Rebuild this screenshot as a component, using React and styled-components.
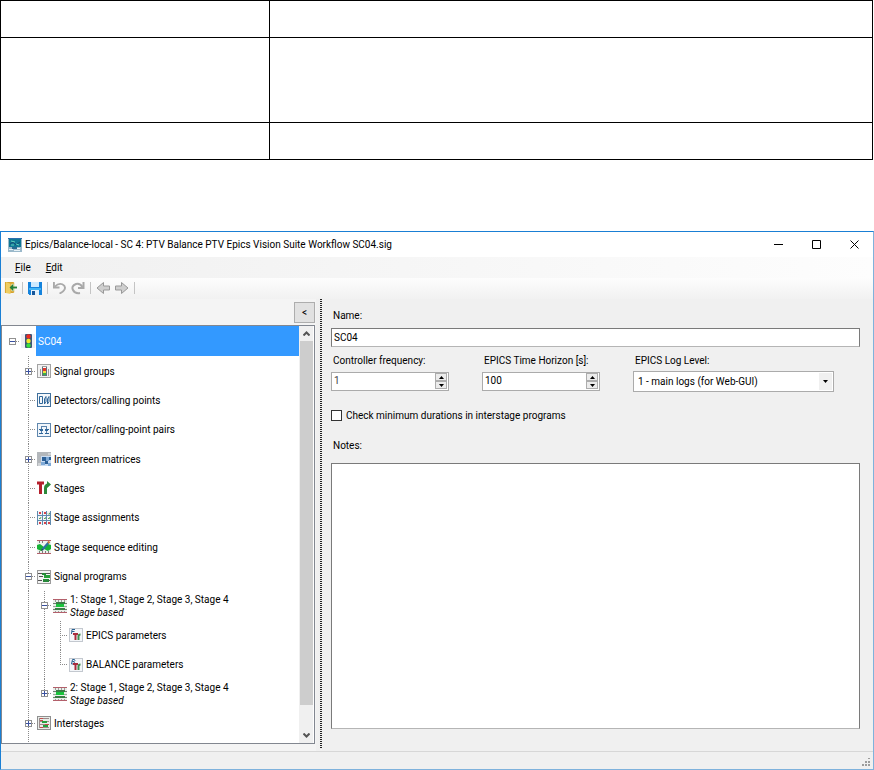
import React from "react";
import styled, { createGlobalStyle, css } from "styled-components";

const dotsY = "repeating-linear-gradient(to bottom, #8a8a8a 0 1px, transparent 1px 2px)";
const dotsX = "repeating-linear-gradient(to right, #8a8a8a 0 1px, transparent 1px 2px)";

const GlobalStyle = createGlobalStyle`
  * { box-sizing: border-box; }
  body { margin: 0; background: #fff; }
  body, button, input, select, textarea {
    font-family: Roboto, "Open Sans", sans-serif;
    font-size: 10px;
    line-height: 13px;
    color: #000;
  }
  button { padding: 0; }
`;

const Page = styled.div`
  display: flex;
  flex-direction: column;
  gap: 71px;
  min-height: 100vh;
`;

const DocTable = styled.table`
  width: calc(100% - 1px);
  border-collapse: collapse;
  table-layout: fixed;
  td { border: 1px solid #000; padding: 0; }
  td:first-child { width: 269px; }
`;

const DocRow = styled.tr`
  height: ${(p) => (p.$tall ? 85 : 37)}px;
`;

const Window = styled.main`
  flex: 1;
  display: flex;
  flex-direction: column;
  border: 1px solid #7fb2dc;
  border-top-color: #1a7fd4;
  border-left-color: #1a7fd4;
  background: #f0f0f0;
`;

const TitleBar = styled.header`
  display: flex;
  align-items: center;
  height: 25px;
  padding-left: 7px;
  background: #fff;
`;

const Title = styled.h1`
  flex: 1;
  margin: 0 0 0 3px;
  font-size: 10px;
  font-weight: 400;
  white-space: nowrap;
`;

const WindowButton = styled.button`
  display: grid;
  place-items: center;
  width: 38px;
  height: 25px;
  border: 0;
  background: none;
`;

const MenuBar = styled.nav`
  display: flex;
  align-items: center;
  gap: 15px;
  height: 21px;
  padding-left: 14px;
  background: linear-gradient(to right, #f0f0f0, #fdfdfd);
`;

const MenuItem = styled.button`
  border: 0;
  background: none;
  &::first-letter { text-decoration: underline; }
`;

const Toolbar = styled.div`
  display: flex;
  align-items: center;
  gap: 5px;
  height: 21px;
  padding: 0 0 2px 3px;
  background: linear-gradient(#fdfdfd, #f1f1f1);
`;

const ToolButton = styled.button`
  display: grid;
  border: 0;
  background: none;
`;

const Separator = styled.span`
  width: 1px;
  height: 12px;
  background: #c4c4c4;
`;

const Body = styled.div`
  flex: 1;
  display: flex;
`;

const Sidebar = styled.aside`
  display: flex;
  flex-direction: column;
  flex: 0 0 315px;
  padding-bottom: 7px;
  background: #f4f4f4;
`;

const SidebarHead = styled.div`
  display: flex;
  justify-content: flex-end;
  padding: 3px 1px 2px 0;
`;

const CollapseButton = styled.button`
  width: 21px;
  height: 21px;
  border: 1px solid #adadad;
  background: #e1e1e1;
`;

const TreeBox = styled.div`
  flex: 1;
  display: flex;
  margin-right: 1px;
  padding-right: 1px;
  border: 1px solid #828790;
  background: #fff;
`;

const TreeList = styled.ul`
  flex: 1;
  display: flex;
  flex-direction: column;
  margin: 0;
  padding: 0 0 5px;
  list-style: none;
  background: ${dotsY} 26px 100% / 1px 12px no-repeat;
`;

const TreeRow = styled.li`
  flex: 1 0 ${(p) => (p.$root ? 30 : 29)}px;
  display: flex;
  align-items: center;
  padding-left: 2px;
`;

const Cell = styled.span`
  align-self: stretch;
  display: grid;
  place-items: center;
  width: 16px;
  padding-left: 1px;
  background-repeat: no-repeat;
  background-position: 8px 0, 8px 50%;
  background-size: 1px ${(p) => (p.$line === "full" ? "100%" : p.$line === "half" ? "50%" : "0")},
    ${(p) => (p.$joint ? "8px 1px" : "0 1px")};
  background-image: ${dotsY}, ${dotsX};
`;

const Expander = styled.button`
  display: grid;
  place-items: center;
  width: 7px;
  height: 7px;
  border: 1px solid #919191;
  background: #fff;
`;

const RowIcon = styled.span`
  display: grid;
  place-items: center;
  width: 14px;
  height: 14px;
  margin: 0 1px;
`;

const Label = styled.span`
  padding-left: 2px;
  white-space: nowrap;
  em { display: block; }
  ${(p) =>
    p.$selected &&
    css`
      align-self: stretch;
      flex: 1;
      display: flex;
      align-items: center;
      background: #3399ff;
      color: #fff;
    `}
`;

const ScrollBar = styled.div`
  display: flex;
  flex-direction: column;
  width: 14px;
  background: #f0f0f0;
  padding: 0 0 0 1px;
`;

const ScrollArrow = styled.button`
  display: grid;
  place-items: center;
  height: 15px;
  border: 0;
  background: none;
`;

const Track = styled.div`
  flex: 1;
  display: flex;
  flex-direction: column;
`;

const Thumb = styled.div`
  height: 94%;
  background: #cdcdcd;
`;

const Splitter = styled.div`
  width: 2px;
  margin: 0 9px 2px 4px;
  background: repeating-linear-gradient(to bottom, #222 0 1px, transparent 1px 2px);
`;

const Form = styled.section`
  flex: 1;
  display: flex;
  flex-direction: column;
  padding: 10px 13px 22px 0;
`;

const FieldLabel = styled.label`
  padding-left: 2px;
`;

const TextInput = styled.input`
  height: 19px;
  margin-top: 6px;
  padding: 0 2px;
  border: 1px solid #7a7a7a;
  border-bottom-color: #b5b5b5;
  border-radius: 0;
  background: #fff;
`;

const FieldRow = styled.div`
  display: flex;
  gap: 33px;
  padding-top: 7px;
`;

const Field = styled.div`
  display: flex;
  flex-direction: column;
  gap: 4px;
  width: ${(p) => (p.$wide ? 201 : 118)}px;
`;

const SpinBox = styled.div`
  display: flex;
  height: 19px;
  margin-top: 1px;
  border: 1px solid #ababab;
  background: #fff;
`;

const SpinInput = styled.input`
  flex: 1;
  min-width: 0;
  padding: 0 0 3px 2px;
  border: 0;
  background: none;
  appearance: textfield;
  color: ${(p) => (p.$muted ? "#444" : "#000")};
  &::-webkit-inner-spin-button { appearance: none; }
`;

const SpinButtons = styled.div`
  display: flex;
  flex-direction: column;
  width: 12px;
  margin-right: 1px;
`;

const SpinButton = styled.button`
  display: grid;
  place-items: center;
  height: 8px;
  border: 1px solid #adadad;
  background: #ececec;
`;

const SelectBox = styled.div`
  display: grid;
  height: 21px;
  border: 1px solid #ababab;
  background: #fff;
  > * { grid-area: 1 / 1; }
`;

const Select = styled.select`
  appearance: none;
  padding: 0 14px 0 4px;
  border: 0;
  border-radius: 0;
  background: none;
`;

const SelectArrow = styled.span`
  justify-self: end;
  display: grid;
  place-items: center;
  width: 13px;
  margin: 1px;
  background: #f0f0f0;
  pointer-events: none;
`;

const CheckLabel = styled.label`
  display: flex;
  align-items: center;
  gap: 4px;
  margin: 17px 0;
`;

const CheckBox = styled.input`
  appearance: none;
  width: 11px;
  height: 11px;
  margin: 0;
  border: 1px solid #333;
  background: #fff;
  &:checked { background: #333; }
`;

const Notes = styled.textarea`
  flex: 1;
  min-height: 80px;
  margin-top: 11px;
  padding: 2px;
  border: 1px solid #7a7a7a;
  border-bottom-color: #b5b5b5;
  border-radius: 0;
  background: #fff;
  resize: none;
`;

const StatusBar = styled.footer`
  display: flex;
  justify-content: flex-end;
  align-items: flex-end;
  height: 18px;
  padding: 0 2px 2px 0;
  border-top: 1px solid #d7d7d7;
`;

const Icon = ({ size = 14, crisp, children }) => (
  <svg
    width={size}
    height={size}
    viewBox="0 0 14 14"
    shapeRendering={crisp ? "crispEdges" : "auto"}
    aria-hidden="true"
  >
    {children}
  </svg>
);

const AppIcon = () => (
  <Icon>
    <rect width="14" height="14" fill="#9bb9cb" />
    <rect x="1" y="1" width="12" height="8" fill="#0f7795" />
    <path d="M0 .5h14" stroke="#2b6fae" />
    <path d="M2 6l3-2 3 3 4-3" stroke="#174c75" fill="none" />
    <path d="M3 3l4 1M8 6l3 1M3 7h3" stroke="#5fd3bd" fill="none" />
    <path d="M1 11.500h4M6 12.500h6M9 10.500h3" stroke="#e8f2f7" fill="none" />
    <rect x="4" y="9" width="5" height="2" fill="#286a91" />
  </Icon>
);

const LightIcon = () => (
  <Icon>
    <rect x="0" y="0" width="14" height="14" fill="#eeeef4" />
    <rect x="4" y="0" width="7" height="14" rx="1" fill="#3d5676" />
    <circle cx="7.500" cy="2.500" r="2.200" fill="#f02a20" />
    <circle cx="7.500" cy="7" r="2.200" fill="#f5e92b" />
    <circle cx="7.500" cy="11.500" r="2.200" fill="#35e03b" />
  </Icon>
);

const GroupIcon = () => (
  <Icon crisp>
    <rect x="0.500" y="0.500" width="13" height="13" fill="#f2f2f2" stroke="#a3a3a3" />
    <path d="M3.500 5v7M11.500 5v7M5 2.500h5" stroke="#9c9c9c" fill="none" />
    <rect x="5" y="3" width="5" height="9" fill="#64707c" />
    <rect x="6" y="3" width="3" height="1" fill="#fff" />
    <rect x="6" y="4" width="3" height="3" fill="#e6372c" />
    <rect x="6" y="7" width="3" height="2" fill="#f3e23a" />
    <rect x="6" y="9" width="3" height="2" fill="#3caf4a" />
  </Icon>
);

const DetectorIcon = () => (
  <Icon>
    <rect x="0.500" y="0.500" width="13" height="13" fill="#f5f8fb" stroke="#40709c" />
    <path d="M2.500 3.500h3v7h-3z" stroke="#2f6699" fill="none" />
    <path d="M7.500 11V6l1.500-2.500V8.500zM10.500 11V6L12 3.500V8.500z" stroke="#2f6699" fill="none" />
  </Icon>
);

const PairIcon = () => (
  <Icon crisp>
    <rect x="0.500" y="0.500" width="13" height="13" fill="#f1f6fb" stroke="#5f87ae" />
    <path d="M4.500 11V3.500h5V11" stroke="#5a83ad" fill="none" />
    <path d="M2 6.500h4M8 6.500h4M2 10.500h4M8 10.500h4" stroke="#2f6699" />
    <path d="M3 7h3v1H3zM8 7h3v1H8z" fill="#2f6699" />
  </Icon>
);

const MatrixIcon = () => (
  <Icon crisp>
    <rect width="14" height="14" fill="#c9dcf2" />
    <path d="M0 0h14v4H4v10H0z" fill="#b3b7bb" />
    <path d="M1 11h3v3H1zM11 1h3v2h-3z" fill="#d0d3d6" />
    <path d="M5 5h4v4H5zM8 9h3v3H8zM12 5h2v3h-2z" fill="#2c6097" />
    <path d="M9 5h3v4H9zM4 10h4v3H4zM11 11h3v3h-3z" fill="#7ea9d6" />
  </Icon>
);

const StagesIcon = () => (
  <Icon>
    <path d="M0 2h7M3.500 2v11" stroke="#b5202d" strokeWidth="3" fill="none" />
    <path d="M8.500 13V7q0-3 3-3" stroke="#2d8a3b" strokeWidth="3" fill="none" />
    <path d="M10 0l4 3.500-4 3.500z" fill="#2d8a3b" />
  </Icon>
);

const AssignIcon = () => (
  <Icon>
    <rect width="14" height="14" fill="#f3f6f7" />
    <path d="M2 1l2 2M4 1L2 3M7 1l2 2M9 1L7 3M2 11l2 2M4 11l-2 2M7 11l2 2M9 11l-2 2" stroke="#d4444c" />
    <path d="M11 2.500l1 1 1-2M2 7l1 1 1-2M7 7l1 1 1-2M11 7l1 1 1-2" stroke="#5da35f" fill="none" />
    <path d="M.5 0v14M5.500 0v14M9.500 0v14M13.500 0v14M0 4.500h14M0 9.500h14" stroke="#5f8aaf" />
    <path d="M11 11l2 2M13 11l-2 2" stroke="#d4444c" />
  </Icon>
);

const SequenceIcon = () => (
  <Icon>
    <rect y="1" width="14" height="12" fill="#eef2ee" />
    <path d="M0 .5h14M0 13.500h14" stroke="#b3606b" />
    <path d="M2.500 1v2M5.500 1v2M2.500 11v2M5.500 11v2M8.500 11v2M11.500 11v2" stroke="#7d7d7d" />
    <path d="M0 5l3-1 4 3 4-3 3 1v4l-3 2-4-2-3 2-4-2z" fill="#17b236" />
    <path d="M5 10l7-8" stroke="#2f6fa3" strokeWidth="2" />
    <path d="M4 11l2-1-1-1z" fill="#222" />
    <path d="M11 3l1.500-1.500" stroke="#d77d32" strokeWidth="2" />
  </Icon>
);

const ProgramsIcon = () => (
  <Icon crisp>
    <rect x="0.500" y="0.500" width="13" height="13" fill="#f4f4f4" stroke="#9b9b9b" />
    <path d="M1 3.500h4M2 6.500h4M1 10.500h4M8 3.500h5M11 10.500h2" stroke="#555" />
    <rect x="5" y="3" width="4" height="2" fill="#27883a" />
    <rect x="7" y="5" width="6" height="3" fill="#27a03a" />
    <rect x="6" y="9" width="6" height="3" fill="#27883a" />
  </Icon>
);

const ProgramIcon = () => (
  <Icon crisp>
    <rect y="1" width="14" height="12" fill="#eaf0ea" />
    <path d="M0 .5h14M0 13.500h14" stroke="#b3606b" />
    <path d="M0 4.500h14M0 10.500h14" stroke="#6b7f70" />
    <path d="M2.500 1v2M5.500 1v2M8.500 1v2M11.500 1v2M2.500 12v1M5.500 12v1M8.500 12v1M11.500 12v1" stroke="#9a9a9a" />
    <rect x="3" y="3" width="9" height="2" fill="#3b7c46" />
    <rect x="3" y="5" width="8" height="3" fill="#19c43c" />
    <path d="M0 7.500h3M11 7.500h3" stroke="#9aa79c" />
    <rect x="2" y="9" width="10" height="2" fill="#3b7c46" />
  </Icon>
);

const ParamIcon = ({ balance }) => (
  <Icon>
    <rect x="0.500" y="0.500" width="13" height="13" fill="#f4f6f9" stroke="#c3c8cf" />
    {balance ? (
      <path d="M2.500 6L3.500 1.500h2q1 1-.5 2H3.500h1.500q1 1.500-.5 2.500z" stroke="#2a6292" fill="none" />
    ) : (
      <path d="M6 1.500H3L2.500 6M3 3.500h2.500" stroke="#2a6292" fill="none" />
    )}
    <path d="M4 6h5M6.500 6v6" stroke="#a92b3b" strokeWidth="2" />
    <path d="M9.500 12V8q0-1.500 2-1.500" stroke="#3d8a4c" strokeWidth="2" fill="none" />
  </Icon>
);

const InterstageIcon = () => (
  <Icon crisp>
    <rect x="0.500" y="0.500" width="13" height="13" fill="#e8ece8" stroke="#8f8f8f" />
    <path d="M2.500 2v10M2 2.500h10M2 5.500h10M2 8.500h10M2 11.500h10" stroke="#9b8b8b" />
    <path d="M5 5h5v2H5zM6 9h5v2H6z" fill="#24a03c" />
    <path d="M3 4.500h3M8 8.500h4M3 2.500h3M3 11.500h3" stroke="#c44a4a" />
  </Icon>
);

const OpenIcon = () => (
  <Icon size={13}>
    <path d="M1 1h9l1 1v10l-1 1H1z" fill="#d7a32c" />
    <path d="M2 1l5 2v11l-5-1z" fill="#efcd61" />
    <path d="M8 3h3v8H8z" fill="#f8ecc2" />
    <path d="M14 7H9" stroke="#27803a" strokeWidth="2" />
    <path d="M6 7l4-4v8z" fill="#27803a" />
  </Icon>
);

const SaveIcon = () => (
  <Icon crisp>
    <path d="M0 1h13l1 1v12H1l-1-1z" fill="#1583dc" />
    <rect x="3" y="1" width="8" height="5" fill="#cdeaff" />
    <rect x="1" y="7" width="12" height="2" fill="#40b5f6" />
    <rect x="3" y="9" width="8" height="5" fill="#e4f1fb" />
    <rect x="4" y="10" width="3" height="4" fill="#15569b" />
  </Icon>
);

const UndoIcon = () => (
  <Icon size={13}>
    <path d="M2 6q4-4 8-2.500 4 2 2.500 5.500Q11 12 7 13.500" stroke="#a9a9a9" strokeWidth="2" fill="none" />
    <path d="M1 1v6h6" stroke="#a9a9a9" strokeWidth="2" fill="none" />
  </Icon>
);

const RedoIcon = () => (
  <Icon>
    <path d="M11.500 6Q9 2 5 3 0 5 2 9q2 4 7 3" stroke="#a9a9a9" strokeWidth="2" fill="none" />
    <path d="M12.500 1v6H7" stroke="#a9a9a9" strokeWidth="2" fill="none" />
  </Icon>
);

const ArrowIcon = ({ right }) => (
  <Icon>
    <path
      d={right ? "M.5 5h6V1.500L13 7l-6.500 5.500V9h-6z" : "M13.500 5h-6V1.500L1 7l6.500 5.500V9h6z"}
      fill="#cfcfcf"
      stroke="#999"
    />
  </Icon>
);

const Sign = ({ plus }) => (
  <svg width="5" height="5" viewBox="0 0 5 5" aria-hidden="true">
    <path d={plus ? "M0 2.500h5M2.500 0v5" : "M0 2.500h5"} stroke="#3a51a0" />
  </svg>
);

const Caret = ({ up }) => (
  <svg width="5" height="3" viewBox="0 0 5 3" aria-hidden="true">
    <path d={up ? "M0 3h5L2.500 0z" : "M0 0h5L2.500 3z"} fill="#000" />
  </svg>
);

const Chevron = ({ up }) => (
  <svg width="7" height="5" viewBox="0 0 7 5" aria-hidden="true">
    <path d={up ? "M.5 4.500l3-3 3 3" : "M.5 .5l3 3 3-3"} fill="none" stroke="#555" strokeWidth="2" />
  </svg>
);

/* cells: n = blank, f = full guide, h = half guide; the last one joins the icon */
const rows = [
  { text: "SC04", icon: LightIcon, cells: "n", sign: "-", selected: true },
  { text: "Signal groups", icon: GroupIcon, cells: "nf", sign: "+" },
  { text: "Detectors/calling points", icon: DetectorIcon, cells: "nf" },
  { text: "Detector/calling-point pairs", icon: PairIcon, cells: "nf" },
  { text: "Intergreen matrices", icon: MatrixIcon, cells: "nf", sign: "+" },
  { text: "Stages", icon: StagesIcon, cells: "nf" },
  { text: "Stage assignments", icon: AssignIcon, cells: "nf" },
  { text: "Stage sequence editing", icon: SequenceIcon, cells: "nf" },
  { text: "Signal programs", icon: ProgramsIcon, cells: "nf", sign: "-" },
  { text: "1: Stage 1, Stage 2, Stage 3, Stage 4", note: "Stage based", icon: ProgramIcon, cells: "nff", sign: "-" },
  { text: "EPICS parameters", icon: ParamIcon, cells: "nfff" },
  { text: "BALANCE parameters", icon: () => <ParamIcon balance />, cells: "nffh" },
  { text: "2: Stage 1, Stage 2, Stage 3, Stage 4", note: "Stage based", icon: ProgramIcon, cells: "nfh", sign: "+" },
  { text: "Interstages", icon: InterstageIcon, cells: "nf", sign: "+" },
];

const lineOf = { n: "none", f: "full", h: "half" };

const Row = ({ text, note, icon: Picture, cells, sign, selected }) => (
  <TreeRow $root={cells.length === 1}>
    {[...cells].map((c, i) => {
      const last = i === cells.length - 1;
      return (
        <Cell key={i} $line={lineOf[c]} $joint={last}>
          {last && sign && (
            <Expander aria-label={sign === "+" ? `Expand ${text}` : `Collapse ${text}`}>
              <Sign plus={sign === "+"} />
            </Expander>
          )}
        </Cell>
      );
    })}
    <RowIcon>
      <Picture />
    </RowIcon>
    <Label $selected={selected}>
      {text}
      {note && <em>{note}</em>}
    </Label>
  </TreeRow>
);

const Spin = ({ id, label, value, muted }) => (
  <Field>
    <FieldLabel htmlFor={id}>{label}</FieldLabel>
    <SpinBox>
      <SpinInput id={id} type="number" defaultValue={value} $muted={muted} />
      <SpinButtons>
        <SpinButton aria-label="Increase"><Caret up /></SpinButton>
        <SpinButton aria-label="Decrease"><Caret /></SpinButton>
      </SpinButtons>
    </SpinBox>
  </Field>
);

export default function App() {
  return (
    <Page>
      <GlobalStyle />
      <DocTable>
        <tbody>
          <DocRow><td /><td /></DocRow>
          <DocRow $tall><td /><td /></DocRow>
          <DocRow><td /><td /></DocRow>
        </tbody>
      </DocTable>
      <Window>
        <TitleBar>
          <AppIcon />
          <Title>Epics/Balance-local - SC 4: PTV Balance PTV Epics Vision Suite Workflow SC04.sig</Title>
          <WindowButton aria-label="Minimize">
            <svg width="9" height="9"><path d="M0 4.500h9" stroke="#000" /></svg>
          </WindowButton>
          <WindowButton aria-label="Maximize">
            <svg width="9" height="9"><path d="M.5 .5h8v8h-8z" fill="none" stroke="#000" /></svg>
          </WindowButton>
          <WindowButton aria-label="Close">
            <svg width="9" height="9"><path d="M.5 .5l8 8M8.500 .5l-8 8" stroke="#000" /></svg>
          </WindowButton>
        </TitleBar>
        <MenuBar>
          <MenuItem>File</MenuItem>
          <MenuItem>Edit</MenuItem>
        </MenuBar>
        <Toolbar>
          <ToolButton aria-label="Open"><OpenIcon /></ToolButton>
          <Separator />
          <ToolButton aria-label="Save"><SaveIcon /></ToolButton>
          <Separator />
          <ToolButton aria-label="Undo"><UndoIcon /></ToolButton>
          <ToolButton aria-label="Redo"><RedoIcon /></ToolButton>
          <Separator />
          <ToolButton aria-label="Back"><ArrowIcon /></ToolButton>
          <ToolButton aria-label="Forward"><ArrowIcon right /></ToolButton>
          <Separator />
        </Toolbar>
        <Body>
          <Sidebar>
            <SidebarHead>
              <CollapseButton>&lt;</CollapseButton>
            </SidebarHead>
            <TreeBox>
              <TreeList>
                {rows.map((r) => <Row key={r.text} {...r} />)}
              </TreeList>
              <ScrollBar>
                <ScrollArrow aria-label="Scroll up"><Chevron up /></ScrollArrow>
                <Track><Thumb /></Track>
                <ScrollArrow aria-label="Scroll down"><Chevron /></ScrollArrow>
              </ScrollBar>
            </TreeBox>
          </Sidebar>
          <Splitter />
          <Form>
            <FieldLabel htmlFor="name">Name:</FieldLabel>
            <TextInput id="name" defaultValue="SC04" />
            <FieldRow>
              <Spin id="frequency" label="Controller frequency:" value="1" muted />
              <Spin id="horizon" label="EPICS Time Horizon [s]:" value="100" />
              <Field $wide>
                <FieldLabel htmlFor="level">EPICS Log Level:</FieldLabel>
                <SelectBox>
                  <Select id="level">
                    <option>1 - main logs (for Web-GUI)</option>
                  </Select>
                  <SelectArrow><Caret /></SelectArrow>
                </SelectBox>
              </Field>
            </FieldRow>
            <CheckLabel>
              <CheckBox type="checkbox" />
              Check minimum durations in interstage programs
            </CheckLabel>
            <FieldLabel htmlFor="notes">Notes:</FieldLabel>
            <Notes id="notes" />
          </Form>
        </Body>
        <StatusBar>
          <svg width="9" height="9" viewBox="0 0 9 9" aria-hidden="true">
            <path d="M6 0h2v1H6zM3 3h2v2H3zM6 3h2v2H6zM0 6h2v2H0zM3 6h2v2H3zM6 6h2v2H6z" fill="#9c9c9c" />
          </svg>
        </StatusBar>
      </Window>
    </Page>
  );
}
